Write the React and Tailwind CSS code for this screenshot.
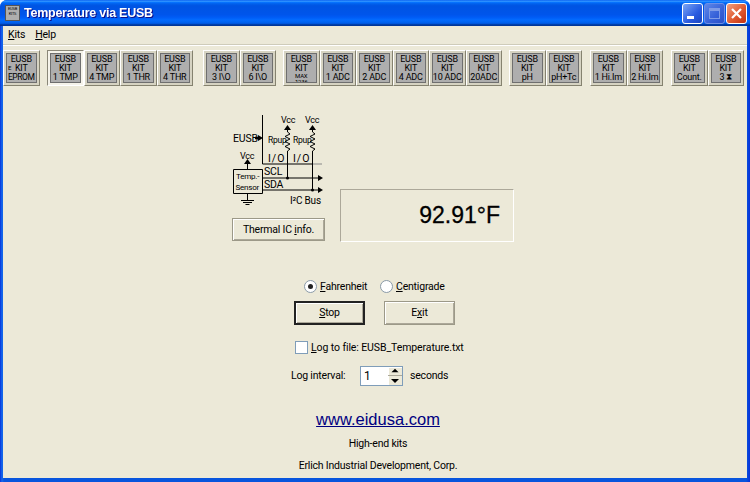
import React from 'react';

const groups = [
  { gap: 'mr-[7.5px]', items: ['EPROM'] },
  { gap: 'mr-[10px]', items: ['1 TMP', '4 TMP', '1 THR', '4 THR'] },
  { gap: 'mr-[7px]', items: ['3 I\\O', '6 I\\O'] },
  { gap: 'mr-[7px]', items: ['MAX 1236', '1 ADC', '2 ADC', '4 ADC', '10 ADC', '20ADC'] },
  { gap: 'mr-[8px]', items: ['pH', 'pH+Tc'] },
  { gap: 'mr-[8px]', items: ['1 Hi.Im', '2 Hi.Im'] },
  { gap: '', items: ['Count.', '3 ⧗'] },
];

const KitButton = ({ label, pressed }) => (
  <div
    className={
      'w-[36.5px] h-[36px] shrink-0 p-[2px] border ' +
      (pressed
        ? 'border-t-[#8a8778] border-l-[#8a8778] border-r-white border-b-white bg-[#f5f3ea]'
        : 'border-t-white border-l-white border-r-[#85826f] border-b-[#85826f] bg-[#d6d3c2]')
    }
  >
    <div className="relative h-full w-full bg-[#aeaeae] border border-[#6f6f6f] flex flex-col items-center text-[9px] leading-[9px] text-black font-['Roboto',sans-serif] pt-[1px] overflow-hidden whitespace-nowrap">
      <span>EUSB</span>
      <span>KIT</span>
      {label === 'EPROM' && <span className="absolute left-[1px] top-[11px] text-[6px] leading-[6px]">E</span>}
      {label === 'MAX 1236' ? (
        <span className="text-[6px] leading-[5.500px] text-center w-[20px] whitespace-normal">{label}</span>
      ) : (
        <span className={label === 'EPROM' ? 'text-[8.500px] tracking-[-0.4px]' : 'text-[9px] tracking-[-0.2px]'}>{label}</span>
      )}
    </div>
  </div>
);

const Circuit = () => (
  <svg width="96" height="102" viewBox="0 0 96 102" className="block" fontFamily="Roboto, sans-serif" fontSize="10.500" fill="#000">
    <g stroke="#000" fill="none" strokeWidth="1">
      <path d="M30.500 2V51M30.500 51H80" />
      <path d="M80 51H90" stroke="#888" />
      <path d="M23 25H27" strokeWidth="2.500" />
      <path d="M55.500 16V19l2.500 2-5 2.500 5 2.500-5 2.500 5 2.500-5 2.500 5 2.500-2.500 2V65" />
      <path d="M80.500 16V19l2.500 2-5 2.500 5 2.500-5 2.500 5 2.500-5 2.500 5 2.500-2.500 2V77" />
      <path d="M30 65H86M30 77H86" />
      <path d="M1.500 56.500H30.500V80.500H1.500Z" />
      <path d="M15.500 50V56M15.500 81V87M9 87.500H22M11 89.500H20M13.500 91.500H17.500" />
    </g>
    <g fill="#000">
      <path d="M26 22l5 3-5 3ZM52 17l3.500-5 3.500 5ZM77 17l3.500-5 3.500 5ZM12 51l3.500-5 3.500 5ZM86 62l5 3-5 3ZM86 74l5 3-5 3Z" />
      <circle cx="55.500" cy="65" r="1.500" />
      <circle cx="80.500" cy="77" r="1.500" />
    </g>
    <text x="1" y="29">EUSB</text>
    <text x="49" y="10" fontSize="9">Vcc</text>
    <text x="73" y="10" fontSize="9">Vcc</text>
    <text x="8" y="46" fontSize="9">Vcc</text>
    <text x="36" y="30" fontSize="8.500">Rpup</text>
    <text x="61" y="30" fontSize="8.500">Rpup</text>
    <text x="36" y="49" letterSpacing="1">I/O</text>
    <text x="61" y="49" letterSpacing="1">I/O</text>
    <text x="32" y="62">SCL</text>
    <text x="32" y="75">SDA</text>
    <text x="4" y="66" fontSize="8">Temp.-</text>
    <text x="3.500" y="77" fontSize="8">Sensor</text>
    <text x="58" y="91" fontSize="10">I²C Bus</text>
  </svg>
);

const XpButton = ({ className, children }) => (
  <button className={'flex items-center justify-center bg-[#ece9d8] shadow-[inset_1px_1px_0_#fff,inset_-1px_-1px_0_#aca899] ' + className}>
    <span>{children}</span>
  </button>
);

export default function App() {
  return (
    <div className="w-[750px] h-[482px] flex flex-col bg-[linear-gradient(90deg,#0831d9,#166aee_2px,#0855dd_4px,#0855dd_746px,#0831d9)] rounded-t-[7px] overflow-hidden font-['Roboto',sans-serif] text-[10.500px] tracking-[-0.2px] text-black">
      {/* title bar */}
      <div className="h-[26px] shrink-0 flex items-center pl-[5px] pr-[3px] bg-[linear-gradient(180deg,#0058ee_0%,#3593ff_4%,#288eff_6%,#127dff_8%,#036ffc_10%,#0262ee_14%,#0057e5_20%,#0054e3_24%,#0055eb_56%,#005bf5_66%,#026afe_76%,#0062ef_86%,#0052d6_92%,#0040ab_94%,#003092_100%)]">
        <div className="w-[15px] h-[16px] bg-[#aeaeae] border border-[#555] flex flex-col items-center text-[4px] leading-[5px] overflow-hidden">
          <span>EUSB</span>
          <span>KITS</span>
        </div>
        <span className="ml-[4px] text-white font-bold text-[12.500px] tracking-[-0.25px] font-['Liberation_Sans',sans-serif] drop-shadow-[1px_1px_0_#0f1089]">Temperature via EUSB</span>
        <div className="ml-auto mt-[1px] flex gap-[1px]">
          <div className="w-[21px] h-[21px] rounded-[3px] border border-white bg-[linear-gradient(135deg,#7aa5f5,#2a5be0_60%,#1a45c0)] flex items-end pl-[4px] pb-[4px]">
            <div className="w-[7px] h-[3px] bg-white" />
          </div>
          <div className="w-[21px] h-[21px] rounded-[3px] border border-[#6f8fe6] bg-[linear-gradient(135deg,#5f87e8,#3560d8_60%,#2a50c8)] flex items-center justify-center">
            <div className="w-[11px] h-[11px] border border-[#7f9be6] border-t-[3px]" />
          </div>
          <div className="w-[21px] h-[21px] rounded-[3px] border border-white bg-[linear-gradient(135deg,#f0a080,#e05a30_55%,#c03010)] flex items-center justify-center">
            <svg width="13" height="13" viewBox="0 0 13 13"><path d="M2 2l9 9M11 2l-9 9" stroke="#fff" strokeWidth="2.200" /></svg>
          </div>
        </div>
      </div>

      {/* window body */}
      <div className="flex-1 mx-[3px] mb-[4px] min-h-0 bg-[#ece9d8] flex flex-col">
        <div className="h-[18px] shrink-0 flex items-center gap-[10px] pl-[5px]">
          <span><u>K</u>its</span>
          <span><u>H</u>elp</span>
        </div>
        <div className="h-[2px] shrink-0 border-t border-[#cfccba] bg-white" />

        <div className="h-[44px] shrink-0 flex items-start pt-[4px]">
          {groups.map((group, i) => (
            <div key={i} className={'flex ' + group.gap}>
              {group.items.map((label, j) => (
                <KitButton key={j} label={label} pressed={label === '1 TMP'} />
              ))}
            </div>
          ))}
        </div>

        <div className="flex-1 flex flex-col items-start pt-[23px] pl-[229px]">
          <div className="flex items-end">
            <div className="flex flex-col w-[93px] pb-[1px]">
              <Circuit />
              <XpButton className="mt-[3px] w-[93px] h-[23px] border border-[#9c9988]">Thermal IC <u>i</u>nfo.</XpButton>
            </div>
            <div className="ml-[15px] w-[174px] h-[53px] border border-t-[#aca899] border-l-[#aca899] border-r-white border-b-white flex items-center justify-end pr-[13px] text-[23px] tracking-normal [-webkit-text-stroke:0.3px_#000] font-['Liberation_Sans',sans-serif]">
              92.91°F
            </div>
          </div>

          <div className="mt-[38px] ml-[72px] h-[13px] flex items-center">
            <span className="w-[13px] h-[13px] rounded-full bg-white border border-[#8a9aa8] flex items-center justify-center">
              <span className="w-[5px] h-[5px] rounded-full bg-[#222]" />
            </span>
            <span className="ml-[3px] w-[60px]"><u>F</u>ahrenheit</span>
            <span className="w-[13px] h-[13px] rounded-full bg-white border border-[#8a9aa8]" />
            <span className="ml-[3px]"><u>C</u>entigrade</span>
          </div>

          <div className="mt-[8px] ml-[62px] flex gap-[19px]">
            <XpButton className="w-[71px] h-[24px] border-2 border-[#222]"><u>S</u>top</XpButton>
            <XpButton className="w-[71px] h-[24px] border border-[#9c9988]">E<u>x</u>it</XpButton>
          </div>

          <div className="mt-[16px] ml-[63px] h-[13px] flex items-center">
            <span className="w-[13px] h-[13px] bg-white border border-[#7f9db9]" />
            <span className="ml-[3px] tracking-[-0.1px]"><u>L</u>og to file: EUSB_Temperature.txt</span>
          </div>

          <div className="mt-[12px] ml-[59px] flex items-center">
            <span className="w-[69px]">Log interval:</span>
            <div className="w-[43px] h-[20px] border border-[#7f9db9] bg-white flex">
              <span className="flex-1 pl-[3px] text-[12px] leading-[18px]">1</span>
              <div className="w-[14px] flex flex-col bg-[#ece9d8] shadow-[inset_1px_1px_0_#fff]">
                <svg width="14" height="9" viewBox="0 0 14 9" className="border-b border-[#aca899]"><path d="M7 2l4 4H3Z" fill="#000" /></svg>
                <svg width="14" height="9" viewBox="0 0 14 9"><path d="M3 3h8L7 7Z" fill="#000" /></svg>
              </div>
            </div>
            <span className="ml-[7px]">seconds</span>
          </div>

          <div className="w-[292px] flex flex-col items-center">
            <a className="mt-[24px] h-[18px] text-[16.500px] leading-[18px] tracking-normal text-[#000080] underline font-['Liberation_Sans',sans-serif]">www.eidusa.com</a>
            <div className="mt-[9px] leading-[14px]">High-end kits</div>
            <div className="mt-[8px] leading-[14px]">Erlich Industrial Development, Corp.</div>
          </div>
        </div>
      </div>
    </div>
  );
}
